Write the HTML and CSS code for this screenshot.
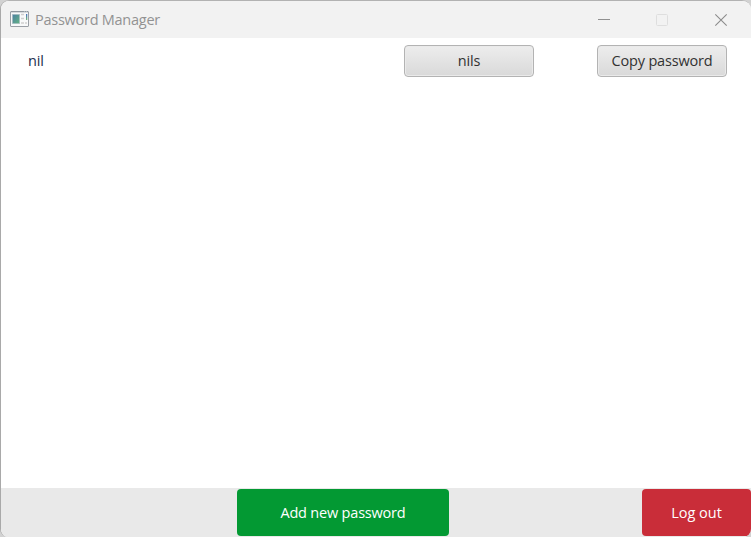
FILE: index.html
```html
<!DOCTYPE html>
<html lang="en">
<head>
<meta charset="utf-8">
<title>Password Manager</title>
<link rel="stylesheet" href="styles.css">
</head>
<body>
<div class="window">
  <header class="titlebar">
    <svg class="app-icon" width="20" height="17" viewBox="0 0 20 17">
      <defs><linearGradient id="pane" x1="0" y1="0" x2="1" y2="1"><stop offset="0" stop-color="#4b7fa3"/><stop offset="1" stop-color="#63b383"/></linearGradient>
      <linearGradient id="bar" x1="0" y1="0" x2="0" y2="1"><stop offset="0" stop-color="#4a70c0"/><stop offset="1" stop-color="#72b877"/></linearGradient></defs>
      <rect x=".5" y=".5" width="18" height="15" rx=".5" fill="#f8f9fa" stroke="#9a9fa6"/>
      <path d="M1 .8h17" stroke="#8c949d"/>
      <path d="M14 1h1M16 1h1" stroke="#d5dade"/>
      <rect x="2.3" y="3.3" width="7.4" height="9.4" fill="url(#pane)" stroke="#b7c4cb" stroke-width=".6"/>
      <path d="M11 3.5h3M11 7.5h3M11 12h3M15 12h2" stroke="#cfcfcf" stroke-width="1.5"/>
      <rect x="16" y="3" width="1.3" height="6" fill="url(#bar)"/>
    </svg>
    <h1 class="title">Password Manager</h1>
    <svg class="controls" width="131" height="14" viewBox="0 0 131 14" fill="none">
      <path d="M0 6.5h12" stroke="#909090"/>
      <rect x="58.5" y="1.5" width="11" height="11" rx="1" stroke="#dedede"/>
      <path d="M117.3 1.3l11.4 11.4M128.7 1.3l-11.4 11.4" stroke="#8b8b8b" stroke-width="1.1"/>
    </svg>
  </header>
  <main class="list">
    <div class="entry">
      <span class="name">nil</span>
      <button class="button">nils</button>
      <button class="button copy">Copy password</button>
    </div>
  </main>
  <footer class="footer">
    <button class="action add">Add new password</button>
    <button class="action logout">Log out</button>
  </footer>
</div>
</body>
</html>
```
FILE: styles.css
```css
* { box-sizing: border-box; }
body {
  margin: 0;
  height: 537px;
  overflow: hidden;
  background: #d2d2d2;
  font: 14.5px/20px "Open Sans", "Noto Sans", sans-serif;
  letter-spacing: -.2px;
  color: #323232;
}
.window {
  display: flex;
  flex-direction: column;
  width: 751px;
  height: 537px;
  overflow: hidden;
  border-top: 1px solid #b2b2b2;
  border-left: 1px solid #a9a9a9;
  border-radius: 9px 9px 8px 8px;
  background: #fff;
}
.titlebar {
  display: flex;
  align-items: center;
  flex: 0 0 37px;
  padding-left: 9px;
  background: #f2f2f2;
}
.app-icon { margin-top: 0; }
.title {
  flex: 1;
  margin: 0 0 0 5px;
  font-size: 14.5px;
  font-weight: 400;
  letter-spacing: -.26px;
  color: #929292;
}
.controls { margin-right: 22px; }
.list { flex: 1; padding: 7px 24px 0 27px; }
.entry { display: flex; align-items: center; }
.name { flex: 1; color: #1e2d4e; }
.button {
  width: 130px;
  height: 32px;
  padding: 0 0 1px;
  border: 1px solid #b3b3b3;
  border-radius: 4px;
  background: linear-gradient(#ededed, #d9d9d9);
  box-shadow: inset 0 0 0 1px #eaeaea;
  font: inherit;
  letter-spacing: -.17px;
  color: #323232;
}
.copy { margin-left: 63px; }
.footer {
  display: flex;
  justify-content: space-between;
  flex: 0 0 49px;
  padding: 1px 0 1px 236px;
  background: #e9e9e9;
}
.action {
  height: 47px;
  padding: 0;
  border: 0;
  border-radius: 4px;
  font: inherit;
  letter-spacing: -.2px;
  color: #fff;
}
.add { width: 212px; background: #039933; }
.logout { width: 109px; background: #c92d39; letter-spacing: 0; }
```
